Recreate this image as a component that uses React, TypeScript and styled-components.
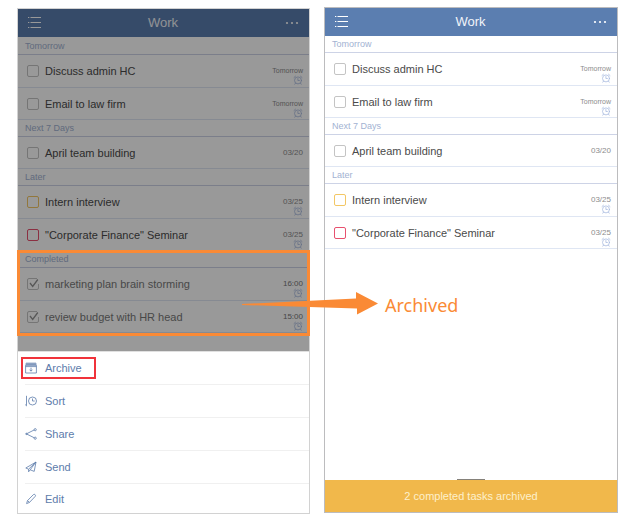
import React from "react";
import styled, { createGlobalStyle } from "styled-components";

const GlobalStyle = createGlobalStyle`
  * { box-sizing: border-box; }
  body {
    margin: 0;
    background: #fff;
    font-family: "Liberation Sans", Arial, sans-serif;
  }
  button { font: inherit; border: 0; background: none; padding: 0; cursor: pointer; }
`;

const Page = styled.main`
  display: grid;
  grid-template-columns: 293fr 294fr;
  gap: 14px;
  padding: 7px 23px 18px 17px;
`;

const Phone = styled.section<{ $lowered?: boolean }>`
  display: flex;
  flex-direction: column;
  min-width: 0;
  border: 1px solid ${(p) => (p.$lowered ? "#d2d2d2" : "#bcbcbe")};
  margin: ${(p) => (p.$lowered ? "1px 0 0" : "0 0 1px")};
  background: #fff;
`;

const Screen = styled.div`
  position: relative;
  padding-bottom: 18px;
`;

const Shade = styled.div`
  position: absolute;
  inset: 0;
  background: rgba(0, 0, 0, 0.4);
`;

const Header = styled.header`
  display: flex;
  align-items: center;
  justify-content: space-between;
  height: 28px;
  padding: 0 10px 1px 9px;
  background: #5b7eb0;
  color: #fff;
`;

const Title = styled.h1`
  margin: 0;
  font-size: 13px;
  font-weight: 400;
  line-height: 16px;
  color: #f1f4f9;
`;

const IconButton = styled.button`
  display: flex;
  color: #fff;
`;

const List = styled.div<{ $top: number }>`
  padding-top: ${(p) => p.$top}px;
`;

const Group = styled.section`
  position: relative;
`;

const GroupTitle = styled.h2`
  margin: 0;
  height: 17px;
  padding: 0 7px;
  border-bottom: 1px solid #cdd3e6;
  font-size: 9px;
  font-weight: 400;
  line-height: 17px;
  color: #a2b2d2;
`;

const Row = styled.label`
  display: flex;
  align-items: center;
  height: 33px;
  padding: 0 6px 0 9px;
  border-bottom: 1px solid #dfe6f3;
  &:last-of-type { height: 32px; }
`;

const Tick = styled.span`
  display: grid;
  margin-right: 6px;
  > * { grid-area: 1 / 1; }
`;

const Box = styled.input<{ $color: string }>`
  appearance: none;
  width: 12px;
  height: 12px;
  margin: 0;
  border: 1px solid ${(p) => p.$color};
  border-radius: 2px;
`;

const TaskName = styled.span<{ $done?: boolean }>`
  flex: 1;
  font-size: 11px;
  line-height: 14px;
  white-space: nowrap;
  color: ${(p) => (p.$done ? "#797979" : "#4a4a4a")};
`;

const Meta = styled.span<{ $small?: boolean; $done?: boolean }>`
  display: flex;
  flex-direction: column;
  align-items: flex-end;
  align-self: flex-start;
  gap: 0;
  padding-top: 12px;
  font-size: ${(p) => (p.$small ? 7 : 8)}px;
  line-height: 8px;
  color: ${(p) => (p.$done ? "#777" : "#8c8c8c")};
`;

const Sheet = styled.nav`
  display: flex;
  flex-direction: column;
  border-top: 1px solid #e0e0e0;
  padding-left: 7px;
`;

const Action = styled.button`
  display: flex;
  align-items: center;
  gap: 8px;
  height: 33px;
  border-bottom: 1px solid #f0f0f0;
  font-size: 11px;
  line-height: 14px;
  text-align: left;
  color: #5d7cab;
  &:last-child { height: 29px; border-bottom: 0; }
`;

const ActionLabel = styled.span`
  font-size: 11px;
`;

const RedFrame = styled.span`
  position: relative;
  display: flex;
  align-items: center;
  gap: 8px;
  &::after {
    content: "";
    position: absolute;
    inset: -4px -14px -4px -4px;
    border: 2px solid #f0333b;
  }
`;

const Callout = styled.div`
  position: absolute;
  z-index: 2;
  inset: -1px -1px -3px;
  border: 3px solid #fa8a35;
`;

const Pointer = styled.div`
  position: absolute;
  top: 36px;
  left: calc(100% - 65px);
  display: flex;
  align-items: center;
  gap: 7px;
  font-family: "Noto Sans", "Open Sans", sans-serif;
  font-size: 18px;
  line-height: 24px;
  color: #fa8a35;
`;

const CalloutText = styled.span`
  padding-top: 4px;
`;

const Toast = styled.footer`
  position: relative;
  margin-top: auto;
  height: 32px;
  background: #f1b84b;
  color: #fdf0cb;
  font-size: 11px;
  line-height: 32px;
  text-align: center;
`;

const Handle = styled.span`
  position: absolute;
  top: -1px;
  left: 50%;
  width: 28px;
  height: 1px;
  margin-left: -14px;
  background: #85817a;
`;

const MenuIcon = () => (
  <svg width="14" height="13" viewBox="0 0 14 13" stroke="currentColor" aria-hidden="true">
    <path d="M3.500 1.5h10.5M3.500 6.5h10.5M3.500 11.5h10.5" strokeWidth="1.2" />
    <path d="M1 1.5h1.3M1 6.5h1.3M1 11.5h1.3" strokeWidth="1" />
  </svg>
);

const MoreIcon = () => (
  <svg width="14" height="4" viewBox="0 0 14 4" fill="currentColor" aria-hidden="true">
    <circle cx="2" cy="2" r="1.1" />
    <circle cx="7" cy="2" r="1.1" />
    <circle cx="12" cy="2" r="1.1" />
  </svg>
);

const AlarmIcon = () => (
  <svg width="10" height="10" viewBox="0 0 10 10" fill="none" stroke="#a9bbdf" strokeWidth=".8" strokeLinecap="round" aria-label="Reminder">
    <circle cx="5" cy="5.4" r="3.5" />
    <path d="M4.900 3.500v2h1.5M1 2.500 2.500 1.200M9 2.500 7.500 1.200M2.500 8.200l-.7 1M7.500 8.200l.7 1" />
  </svg>
);

const CheckMark = () => (
  <svg width="12" height="12" viewBox="0 0 12 12" fill="none" aria-hidden="true">
    <path d="M10 0h2v6h-2z" fill="#fff" />
    <path d="m3 5 2.7 3.5L10.8 1.5" stroke="#929292" strokeWidth="1.3" />
  </svg>
);

const icons: Record<string, React.ReactNode> = {
  Archive: (
    <>
      <path d="M1 1h10v2H1z" fill="currentColor" opacity=".7" />
      <path d="M.6 3.2h10.8v7.8H.6zM.6 4.6h10.8M6 5.7v3.4M4.6 7.7 6 9.2l1.4-1.5" />
    </>
  ),
  Sort: (
    <>
      <path d="M1.5.8v10M.2 9.6l1.3 1.3" />
      <circle cx="7.5" cy="6" r="4" />
      <path d="M7.5 3.5V6h2.2" />
    </>
  ),
  Share: (
    <>
      <path d="m9.300 1.900-7.900 4 7.900 3.900" />
      <circle cx="10.2" cy="1.7" r="1.1" />
      <circle cx="1.4" cy="5.9" r=".7" />
      <circle cx="10.2" cy="10.200" r="1.1" />
    </>
  ),
  Send: <path d="M11 1 .8 7l2.8 1.2L11 1 5.2 8.800l4 1.6L11 1ZM3.6 8.2v2.6l1.6-2" />,
  Edit: <path d="m1.6 10.6.9-3 5.8-5.9q.9-.9 1.8 0 .9.9 0 1.8L4.5 9.4l-2.9 1.2Zm.9-3 2 1.8" />,
};

const ActionIcon = ({ name }: { name: string }) => (
  <svg width="12" height="12" viewBox="0 0 12 12" fill="none" stroke="currentColor" strokeWidth=".8" aria-hidden="true">
    {icons[name]}
  </svg>
);

const Arrow = () => (
  <svg width="136" height="23" viewBox="0 0 136 23" aria-hidden="true">
    <path d="M0 12 114 6.5V0l22 11.500L115 22.500v-6L0 13Z" fill="#fa8a35" />
  </svg>
);

type Task = { name: string; due: string; alarm?: boolean; color?: string; done?: boolean };

const groups: { title: string; tasks: Task[] }[] = [
  {
    title: "Tomorrow",
    tasks: [
      { name: "Discuss admin HC", due: "Tomorrow", alarm: true },
      { name: "Email to law firm", due: "Tomorrow", alarm: true },
    ],
  },
  { title: "Next 7 Days", tasks: [{ name: "April team building", due: "03/20" }] },
  {
    title: "Later",
    tasks: [
      { name: "Intern interview", due: "03/25", alarm: true, color: "#f3c765" },
      { name: '"Corporate Finance" Seminar', due: "03/25", alarm: true, color: "#e8506e" },
    ],
  },
];

const completed: Task[] = [
  { name: "marketing plan brain storming", due: "16:00", alarm: true, done: true },
  { name: "review budget with HR head", due: "15:00", alarm: true, done: true },
];

const TaskRow = ({ task }: { task: Task }) => (
  <Row>
    <Tick>
      <Box type="checkbox" defaultChecked={task.done} $color={task.color ?? "#c4c4c4"} />
      {task.done && <CheckMark />}
    </Tick>
    <TaskName $done={task.done}>{task.name}</TaskName>
    <Meta $small={task.due === "Tomorrow"} $done={task.done}>
      <span>{task.due}</span>
      {task.alarm && <AlarmIcon />}
    </Meta>
  </Row>
);

const TaskGroup = ({ title, tasks, children }: { title: string; tasks: Task[]; children?: React.ReactNode }) => (
  <Group>
    <GroupTitle>{title}</GroupTitle>
    {tasks.map((t) => (
      <TaskRow key={t.name} task={t} />
    ))}
    {children}
  </Group>
);

const TopBar = () => (
  <Header>
    <IconButton aria-label="Lists"><MenuIcon /></IconButton>
    <Title>Work</Title>
    <IconButton aria-label="More"><MoreIcon /></IconButton>
  </Header>
);

export default function App() {
  return (
    <>
      <GlobalStyle />
      <Page>
        <Phone $lowered>
          <Screen>
            <TopBar />
            <List $top={1}>
              {groups.map((g) => (
                <TaskGroup key={g.title} {...g} />
              ))}
              <TaskGroup title="Completed" tasks={completed}>
                <Callout>
                  <Pointer>
                    <Arrow />
                    <CalloutText>Archived</CalloutText>
                  </Pointer>
                </Callout>
              </TaskGroup>
            </List>
            <Shade />
          </Screen>
          <Sheet>
            <Action>
              <RedFrame>
                <ActionIcon name="Archive" />
                <ActionLabel>Archive</ActionLabel>
              </RedFrame>
            </Action>
            {["Sort", "Share", "Send", "Edit"].map((name) => (
              <Action key={name}>
                <ActionIcon name={name} />
                <ActionLabel>{name}</ActionLabel>
              </Action>
            ))}
          </Sheet>
        </Phone>
        <Phone>
          <TopBar />
          <List $top={0}>
            {groups.map((g) => (
              <TaskGroup key={g.title} {...g} />
            ))}
          </List>
          <Toast>
            <Handle />
            2 completed tasks archived
          </Toast>
        </Phone>
      </Page>
    </>
  );
}
